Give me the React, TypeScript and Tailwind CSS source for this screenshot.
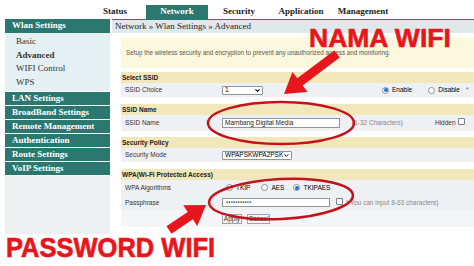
import { ChevronDown } from "lucide-react";

const tabs = ["Status", "Network", "Security", "Application", "Management"];
const lightItems = [
  { label: "Basic", active: false },
  { label: "Advanced", active: true },
  { label: "WIFI Control", active: false },
  { label: "WPS", active: false },
];
const tealItems = [
  "LAN Settings",
  "BroadBand Settings",
  "Remote Management",
  "Authentication",
  "Route Settings",
  "VoIP Settings",
];

// arrow polygon from tail to tip
function arrow(x1: number, y1: number, x2: number, y2: number, shaft: number, headW: number, headL: number) {
  const len = Math.hypot(x2 - x1, y2 - y1);
  const dx = (x2 - x1) / len;
  const dy = (y2 - y1) / len;
  const nx = -dy;
  const ny = dx;
  const bx = x2 - dx * headL;
  const by = y2 - dy * headL;
  const pts = [
    [x1 + (nx * shaft) / 2, y1 + (ny * shaft) / 2],
    [bx + (nx * shaft) / 2, by + (ny * shaft) / 2],
    [bx + (nx * headW) / 2, by + (ny * headW) / 2],
    [x2, y2],
    [bx - (nx * headW) / 2, by - (ny * headW) / 2],
    [bx - (nx * shaft) / 2, by - (ny * shaft) / 2],
    [x1 - (nx * shaft) / 2, y1 - (ny * shaft) / 2],
  ];
  return pts.map((p) => p.join(",")).join(" ");
}

function Radio({ on }: { on?: boolean }) {
  return (
    <span className="inline-flex w-[7px] h-[7px] rounded-full border border-[#8a8f96] bg-white items-center justify-center">
      {on && <span className="w-[4px] h-[4px] rounded-full bg-[#1a73e8]" />}
    </span>
  );
}

function Check() {
  return <span className="inline-block w-[7px] h-[7px] rounded-[1px] border border-[#7a7f86] bg-white" />;
}

function Select({ value, width }: { value: string; width: string }) {
  return (
    <span className={`flex items-center justify-between h-[9px] border border-[#8f959b] rounded-[1px] bg-white pl-[2px] pr-[1px] ${width}`}>
      <span>{value}</span>
      <ChevronDown size={7} strokeWidth={3.5} />
    </span>
  );
}

function Header({ title }: { title: string }) {
  return (
    <div className="h-[11px] bg-[#f2e7b8] flex items-center pl-[1px] font-bold text-[#222]">{title}</div>
  );
}

function Row({ label, children, h = "h-[14px]" }: { label: string; children?: React.ReactNode; h?: string }) {
  return (
    <div className={`${h} bg-[#eef0f3] flex items-center`}>
      <div className="w-[101px] pl-[4px] text-[#333]">{label}</div>
      <div className="flex items-center flex-1">{children}</div>
    </div>
  );
}

export default function App() {
  return (
    <div className="relative w-[474px] h-[266px] overflow-hidden bg-white">
      {/* Tabs */}
      <div className="flex pl-[84px] pt-[5px] h-[19px] font-['Liberation_Serif',serif] font-bold text-[9px]">
        {tabs.map((t) => (
          <div
            key={t}
            className={`w-[62px] h-[14px] flex items-center justify-center ${
              t === "Network" ? "bg-[#2a786f] text-white" : "text-[#222]"
            }`}
          >
            {t}
          </div>
        ))}
      </div>

      <div className="flex">
        {/* Sidebar */}
        <div className="ml-[5px] w-[105px] flex flex-col font-['Liberation_Serif',serif] text-[9px]">
          <div className="h-[14px] bg-[#2a786f] text-white font-bold flex items-center pl-[7px]">Wlan Settings</div>
          <div className="bg-[#e4f0f3] pt-[2px] pb-[1px]">
            {lightItems.map((it) => (
              <div
                key={it.label}
                className={`h-[13.7px] flex items-center pl-[11px] text-[#333] ${it.active ? "font-bold" : ""}`}
              >
                {it.label}
              </div>
            ))}
          </div>
          {tealItems.map((t) => (
            <div key={t} className="h-[14px] bg-[#2a786f] border-t border-white text-white font-bold flex items-center pl-[7px]">
              {t}
            </div>
          ))}
          <div className="h-[59px] bg-[#edf0f1] border-t border-white" />
        </div>

        {/* Main */}
        <div className="ml-[2px] flex-1 font-['Liberation_Sans',Arial,sans-serif] text-[6.5px]">
          <div className="h-[14px] border-t border-[#2a786f] bg-[#dfe9ea] flex items-center pl-[3px] font-['Liberation_Serif',serif] text-[9px] text-[#222]">
            Network » Wlan Settings » Advanced
          </div>
          <div className="pl-[9px]">
            <div className="mt-[4px] h-[31px] bg-[#fcf8dd] flex items-center pl-[5px] text-[6.3px] text-[#555]">
              Setup the wireless security and encryption to prevent any unauthorized access and monitoring.
            </div>

            <div className="mt-[4px]">
              <Header title="Select SSID" />
              <Row label="SSID Choice">
                <Select value="1" width="w-[41px]" />
                <span className="ml-[119px] flex items-center gap-[3px]">
                  <Radio on /> Enable
                </span>
                <span className="ml-[16px] flex items-center gap-[3px]">
                  <Radio /> Disable
                </span>
                <span className="ml-[6px] text-[#666]">*</span>
              </Row>
            </div>

            <div className="mt-[7px]">
              <Header title="SSID Name" />
              <Row label="SSID Name" h="h-[16px]">
                <span className="w-[118px] h-[10px] border border-[#8f959b] bg-white flex items-center pl-[2px] text-[#222]">
                  Mambang Digital Media
                </span>
                <span className="ml-[12px] text-[#888]">(1-32 Characters)</span>
                <span className="ml-[32px] text-[#333]">Hidden</span>
                <span className="ml-[2px]">
                  <Check />
                </span>
              </Row>
            </div>

            <div className="mt-[6px]">
              <Header title="Security Policy" />
              <Row label="Security Mode">
                <Select value="WPAPSKWPA2PSK" width="w-[70px]" />
              </Row>
            </div>

            <div className="mt-[7px]">
              <Header title="WPA(Wi-Fi Protected Access)" />
              <Row label="WPA Algorithms" h="h-[15px]">
                <span className="ml-[4px] flex items-center gap-[3px]">
                  <Radio /> TKIP
                </span>
                <span className="ml-[11px] flex items-center gap-[3px]">
                  <Radio /> AES
                </span>
                <span className="ml-[9px] flex items-center gap-[3px]">
                  <Radio on /> TKIPAES
                </span>
              </Row>
              <Row label="Passphrase" h="h-[15px]">
                <span className="w-[108px] h-[9px] border border-[#8f959b] bg-white flex items-center pl-[3px] text-[3.5px] tracking-[0.2px] text-[#222]">
                  ●●●●●●●●●●●
                </span>
                <span className="ml-[6px]">
                  <Check />
                </span>
                <span className="ml-[3px] text-[#888]">* You can input 8-63 characters)</span>
              </Row>
              <div className="h-[17px] bg-[#f4f5f7] flex items-center pl-[101px]">
                <span className="h-[10px] w-[20px] border border-[#a0a5aa] bg-[#f4f4f4] flex items-center justify-center text-[#333]">
                  Apply
                </span>
                <span className="ml-[5px] h-[10px] w-[23px] border border-[#a0a5aa] bg-[#f4f4f4] flex items-center justify-center text-[#333]">
                  Cancel
                </span>
              </div>
            </div>
          </div>
        </div>
      </div>

      {/* Annotations */}
      <svg className="absolute inset-0 pointer-events-none" width="474" height="266" viewBox="0 0 474 266">
        <ellipse cx="281" cy="123" rx="73" ry="21" fill="none" stroke="#c4121b" strokeWidth="2.5" />
        <ellipse cx="281" cy="199" rx="72" ry="20" fill="none" stroke="#c4121b" strokeWidth="2.5" transform="rotate(-3 281 199)" />
        <polygon points={arrow(337, 54, 284, 94, 9, 25, 20)} fill="#e9151d" />
        <polygon points={arrow(169, 230, 206, 205, 9, 25, 19)} fill="#e9151d" />
      </svg>
      <div className="absolute left-[309px] top-[28px] leading-[20px] font-['Liberation_Sans',Arial,sans-serif] font-bold text-[26.5px] text-[#e9151d] [-webkit-text-stroke:0.6px_#e9151d]">
        NAMA WIFI
      </div>
      <div className="absolute left-[6px] top-[234px] leading-none origin-top-left scale-y-[1.1] font-['Liberation_Sans',Arial,sans-serif] font-bold text-[25.5px] text-[#e9151d] [-webkit-text-stroke:0.6px_#e9151d]">
        PASSWORD WIFI
      </div>
    </div>
  );
}
